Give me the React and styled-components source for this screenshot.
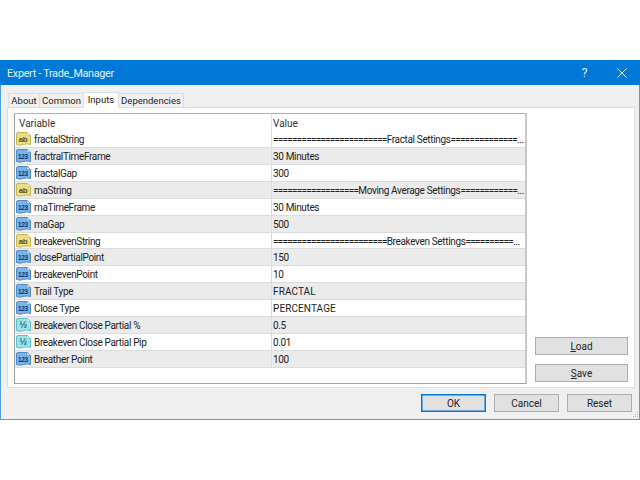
import React from 'react';
import styled, {createGlobalStyle} from 'styled-components';

const GlobalStyle = createGlobalStyle`
  html, body {
    margin: 0;
    padding: 0;
    background: #fff;
    width: 640px;
    height: 480px;
    overflow: hidden;
    font-family: Roboto, "Liberation Sans", sans-serif;
  }
`
const Page = styled.div`
  width: 640px;
  height: 480px;
  padding-top: 60px;
  box-sizing: border-box;
`
const Window = styled.div`
  width: 640px;
  height: 360px;
  box-sizing: border-box;
  background: #f0f0f0;
  border: 1px solid #4da0e3;
  border-top: none;
  display: flex;
  flex-direction: column;
  position: relative;
`
const TitleBar = styled.div`
  height: 25px;
  margin: 0 -1px;
  background: #0078d7;
  color: #e4f0fa;
  display: flex;
  align-items: center;
  padding: 1px 0 0 7px;
  box-sizing: border-box;
  font-size: 10.8px;
  letter-spacing: -0.3px;
  flex-shrink: 0;
`
const Title = styled.span`
  flex: 1;
`
const TitleButton = styled.span`
  width: 37px;
  display: flex;
  justify-content: center;
  font-size: 12px;
`
const Tabs = styled.div`
  display: flex;
  align-items: flex-end;
  height: 22px;
  padding-left: 7px;
  flex-shrink: 0;
`
const Tab = styled.div`
  width: ${p => p.$w}px;
  height: ${p => p.$active ? 16 : 14}px;
  line-height: 14px;
  margin-bottom: ${p => p.$active ? -1 : 0}px;
  background: ${p => p.$active ? '#fff' : '#f0f0f0'};
  border: 1px solid #dcdcdc;
  border-bottom: none;
  box-sizing: border-box;
  text-align: center;
  margin-right: -1px;
  font-size: 9.5px;
  color: #222;
  position: relative;
  z-index: ${p => p.$active ? 1 : 0};
`
const Panel = styled.div`
  margin: 0 4px 0 6px;
  height: 281px;
  background: #fff;
  border: 1px solid #dfdfdf;
  box-sizing: border-box;
  display: flex;
  padding: 5px 6px 3px 6px;
  flex-shrink: 0;
`
const List = styled.div`
  width: 513px;
  height: 271px;
  box-sizing: border-box;
  border: 1px solid #a0a0a0;
  border-right: 2px solid #c8c8c8;
  border-top: 1px solid #b0b0b0;
  background: #fff;
  flex-shrink: 0;
`
const HeaderRow = styled.div`
  display: grid;
  grid-template-columns: 256px 1fr;
  height: 17px;
  font-size: 10px;
  color: #333;
`
const HeaderCell = styled.div`
  padding-left: 4px;
  height: 17px;
  line-height: 19px;
  & + & {
    border-left: 1px solid #e3e3e3;
    padding-left: 1px;
  }
`
const Row = styled.div`
  display: grid;
  grid-template-columns: 256px 1fr;
  height: 16.93px;
  box-sizing: border-box;
  background: ${p => p.$alt ? '#ebebeb' : '#fff'};
  border-bottom: 1px solid #dcdcdc;
  font-size: 10px;
  line-height: 18px;
  letter-spacing: -0.35px;
  color: #222;
`
const NameCell = styled.div`
  display: flex;
  align-items: flex-start;
  gap: 3px;
  padding-left: 1px;
  white-space: nowrap;
  height: 15.93px;
`
const Name = styled.span`
  display: block;
`
const ValueCell = styled.div`
  padding-left: 1px;
  border-left: 1px solid #dcdcdc;
  white-space: nowrap;
  overflow: hidden;
  height: 15.93px;
  letter-spacing: ${p => p.$caps ? '0.1px' : 'inherit'};
`
const Rule = styled.span`
  letter-spacing: -0.75px;
`
const SideButtons = styled.div`
  flex: 1;
  display: flex;
  flex-direction: column;
  justify-content: flex-end;
  align-items: flex-end;
  gap: 9px;
  padding-bottom: 2px;
`
const Button = styled.div`
  width: ${p => p.$w || 65}px;
  height: 18px;
  box-sizing: border-box;
  background: #e1e1e1;
  border: 1px solid ${p => p.$primary ? '#0078d7' : '#adadad'};
  box-shadow: ${p => p.$primary ? 'inset 0 0 0 0.5px #0078d7' : 'none'};
  font-size: 10px;
  color: #222;
  display: flex;
  align-items: center;
  justify-content: center;
`
const Footer = styled.div`
  display: flex;
  justify-content: flex-end;
  gap: 8px;
  padding: 6px 7px 0 0;
`
const Under = styled.span`
  text-decoration: underline;
`
const Grip = styled.svg`
  position: absolute;
  right: 0;
  bottom: 1px;
`
const IconSvg = styled.svg`
  display: block;
  margin-top: 1px;
  flex-shrink: 0;
`

const ICONS = {
  ab: {fill: '#ecdd85', stroke: '#c9b555', text: '#5f5010', label: 'ab', size: 8},
  num: {fill: '#7db2e4', stroke: '#4f8cc6', text: '#0f3560', label: '123', size: 6.5},
  frac: {fill: '#9be3e8', stroke: '#62bfca', text: '#1d6a7a', label: '½', size: 9.5}
}

function TypeIcon({type}) {
  const icon = ICONS[type]
  return (
    <IconSvg width="15" height="14" viewBox="0 0 15 14">
      <path d="M.5 2 Q.5 .5 2 .5 H11 L14.5 3.5 V12.5 Q11 11.2 7.5 12.5 Q4 13.8 .5 12.5 Z"
        fill={icon.fill} stroke={icon.stroke} />
      <path d="M11 .5 V3.5 H14.5 Z" fill="#fff" stroke={icon.stroke} strokeWidth=".6" />
      <text x="7" y="9.8" textAnchor="middle" fontSize={icon.size} fontWeight="bold"
        fontFamily="Liberation Sans, sans-serif" fill={icon.text}>{icon.label}</text>
    </IconSvg>
  )
}

const rows = [
  ['ab', 'fractalString', '========================', 'Fractal Settings', '==============', '...'],
  ['num', 'fractralTimeFrame', '30 Minutes'],
  ['num', 'fractalGap', '300'],
  ['ab', 'maString', '==================', 'Moving Average Settings', '============', '...'],
  ['num', 'maTimeFrame', '30 Minutes'],
  ['num', 'maGap', '500'],
  ['ab', 'breakevenString', '========================', 'Breakeven Settings', '==========', '...'],
  ['num', 'closePartialPoint', '150'],
  ['num', 'breakevenPoint', '10'],
  ['num', 'Trail Type', 'FRACTAL'],
  ['num', 'Close Type', 'PERCENTAGE'],
  ['frac', 'Breakeven Close Partial %', '0.5'],
  ['frac', 'Breakeven Close Partial Pip', '0.01'],
  ['num', 'Breather Point', '100']
]

export default function App() {
  return (
    <Page>
      <GlobalStyle />
      <Window>
        <TitleBar>
          <Title>Expert - Trade_Manager</Title>
          <TitleButton>?</TitleButton>
          <TitleButton>
            <svg width="10" height="10" viewBox="0 0 10 10">
              <path d="M.5 .5 L9.5 9.5 M9.5 .5 L.5 9.5" stroke="#fff" fill="none" />
            </svg>
          </TitleButton>
        </TitleBar>
        <Tabs>
          <Tab $w={32}>About</Tab>
          <Tab $w={45}>Common</Tab>
          <Tab $active $w={36}>Inputs</Tab>
          <Tab $w={66}>Dependencies</Tab>
        </Tabs>
        <Panel>
          <List>
            <HeaderRow>
              <HeaderCell>Variable</HeaderCell>
              <HeaderCell>Value</HeaderCell>
            </HeaderRow>
            {rows.map(([type, name, value, label, tail, dots], i) => (
              <Row key={name} $alt={i % 2 === 1}>
                <NameCell><TypeIcon type={type} /><Name>{name}</Name></NameCell>
                {label ? (
                  <ValueCell>
                    <Rule>{value}</Rule>{label}<Rule>{tail}</Rule>{dots}
                  </ValueCell>
                ) : (
                  <ValueCell $caps={/^[A-Z]+$/.test(value)}>{value}</ValueCell>
                )}
              </Row>
            ))}
          </List>
          <SideButtons>
            <Button $w={93}><span><Under>L</Under>oad</span></Button>
            <Button $w={93}><span><Under>S</Under>ave</span></Button>
          </SideButtons>
        </Panel>
        <Footer>
          <Button $primary>OK</Button>
          <Button>Cancel</Button>
          <Button>Reset</Button>
        </Footer>
        <Grip width="6" height="6" viewBox="0 0 6 6">
          <path d="M4 0h1v1H4zM2 2h1v1H2zM4 2h1v1H4zM0 4h1v1H0zM2 4h1v1H2zM4 4h1v1H4z" fill="#b8b8b8" />
        </Grip>
      </Window>
    </Page>
  )
}
